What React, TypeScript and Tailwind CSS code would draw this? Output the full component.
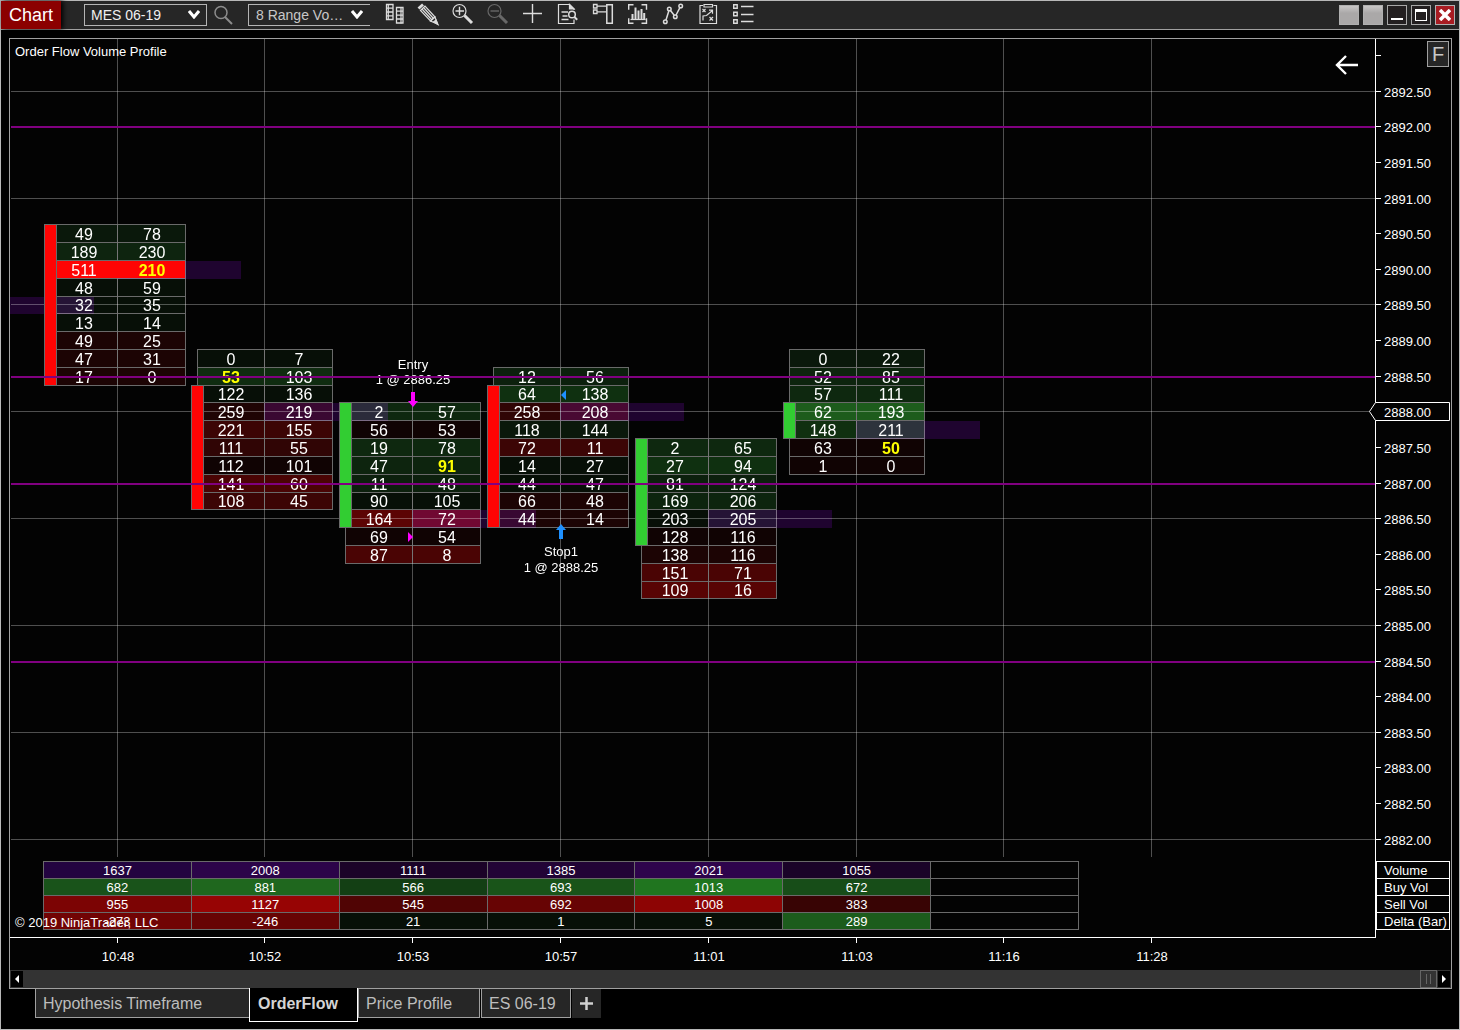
import type { ReactNode } from "react"

type Row = { bid: number; ask: number; fill: string; mark?: "bid" | "ask"; hot?: boolean }
type Bar = { top: number; body: [number, number]; up: boolean; poc: number; rows: Row[] }

const TIMES = ["10:48", "10:52", "10:53", "10:57", "11:01", "11:03", "11:16", "11:28"]
const LEVELS = [2892, 2888.5, 2887, 2884.5]
const MAX_PRICE = 2892.5
const TICK = 17.815
const LINE = "#6a6a6a"

const r = (bid: number, ask: number, fill: string, mark?: "bid" | "ask", hot?: boolean): Row => ({ bid, ask, fill, mark, hot })

// body and poc are row indexes, counted from the top of the bar
const BARS: Bar[] = [
  {
    top: 2890.5, body: [0, 8], up: false, poc: 2,
    rows: [
      r(49, 78, "#0a180b"), r(189, 230, "#0e240f"), r(511, 210, "#ff0404", "ask", true),
      r(48, 59, "#070f07"), r(32, 35, "#070f07"), r(13, 14, "#070f07"),
      r(49, 25, "#1c0404"), r(47, 31, "#1c0404"), r(17, 0, "#1c0404"),
    ],
  },
  {
    top: 2888.75, body: [2, 8], up: false, poc: 3,
    rows: [
      r(0, 7, "#070f07"), r(53, 103, "#0f2c10", "bid"), r(122, 136, "#070f07"),
      r(259, 219, "#1f0404"), r(221, 155, "#3c0505"), r(111, 55, "#300505"),
      r(112, 101, "#100303"), r(141, 60, "#4a0404"), r(108, 45, "#3c0505"),
    ],
  },
  {
    top: 2888, body: [0, 6], up: true, poc: 6,
    rows: [
      r(2, 57, "#0e280f"), r(56, 53, "#100303"), r(19, 78, "#0e280f"),
      r(47, 91, "#0d240e", "ask"), r(11, 48, "#0c200d"), r(90, 105, "#070f07"),
      r(164, 72, "#5c0404"), r(69, 54, "#100303"), r(87, 8, "#4a0404"),
    ],
  },
  {
    top: 2888.5, body: [1, 8], up: false, poc: 2,
    rows: [
      r(12, 56, "#0c200d"), r(64, 138, "#0f3010"), r(258, 208, "#300505"),
      r(118, 144, "#0a180b"), r(72, 11, "#3c0505"), r(14, 27, "#070f07"),
      r(44, 47, "#070f07"), r(66, 48, "#1c0404"), r(44, 14, "#1c0404"),
    ],
  },
  {
    top: 2887.5, body: [0, 5], up: true, poc: 4,
    rows: [
      r(2, 65, "#0e280f"), r(27, 94, "#0f3010"), r(81, 124, "#0c200d"),
      r(169, 206, "#0d240e"), r(203, 205, "#070f07"), r(128, 116, "#100303"),
      r(138, 116, "#1c0404"), r(151, 71, "#4a0404"), r(109, 16, "#580404"),
    ],
  },
  {
    top: 2888.75, body: [3, 4], up: true, poc: 4,
    rows: [
      r(0, 22, "#0a180b"), r(52, 85, "#0d240e"), r(57, 111, "#0e280f"),
      r(62, 193, "#1d5c1c"), r(148, 211, "#103010"), r(63, 50, "#100303", "ask"),
      r(1, 0, "#100303"),
    ],
  },
]

const SUMMARY = [
  { label: "Volume", values: [1637, 2008, 1111, 1385, 2021, 1055], fills: ["#230440", "#2c0449", "#1b0328", "#220436", "#2e044c", "#1a0328"] },
  { label: "Buy Vol", values: [682, 881, 566, 693, 1013, 672], fills: ["#19531a", "#1f671e", "#133f14", "#195419", "#20751f", "#174d18"] },
  { label: "Sell Vol", values: [955, 1127, 545, 692, 1008, 383], fills: ["#7c0404", "#970404", "#500404", "#670404", "#8d0404", "#380404"] },
  { label: "Delta (Bar)", values: [-273, -246, 21, 1, 5, 289], fills: ["#710404", "#670404", "#070f07", "#070f07", "#070f07", "#1c5c1c"] },
]

const barX = (i: number) => Math.floor(107 + 147.8 * i)
const priceY = (price: number) => Math.floor(52.2 + (MAX_PRICE - price) * 4 * 17.81)
const rowY = (price: number) => Math.floor(185.8 + (2890.5 - price) * 4 * TICK)
const textY = (price: number) => Math.floor((rowY(price) + rowY(price - 0.25)) / 2) + 7

function Profile({ x, price }: { x: number; price: number }) {
  const y = rowY(price)
  return <rect className="mix-blend-screen" x={x} y={y + 1} width={124} height={rowY(price - 0.25) - y} fill="#1f042f" />
}

function Cells({ bar, x }: { bar: Bar; x: number }) {
  return (
    <g>
      {bar.rows.map((row, i) => {
        const price = bar.top - i * 0.25
        const y = rowY(price)
        const h = rowY(price - 0.25) - y
        return (
          <g key={i}>
            <rect x={x - 67} y={y} width={136} height={h + 1} fill={LINE} />
            <rect x={x - 66} y={y + 1} width={134} height={h - 1} fill={row.fill} />
            <rect x={x} y={y} width={1} height={h} fill="#3a3a3a" />
          </g>
        )
      })}
    </g>
  )
}

function Body({ bar, x }: { bar: Bar; x: number }) {
  const y = rowY(bar.top - bar.body[0] * 0.25)
  const end = rowY(bar.top - (bar.body[1] + 1) * 0.25)
  return (
    <g>
      {bar.rows.map((row, i) => {
        if (!row.hot) return null
        const top = rowY(bar.top - i * 0.25)
        return <rect key={i} x={x - 60} y={top + 1} width={128} height={17} fill={row.fill} />
      })}
      <rect x={x - 73} y={y} width={13} height={end - y + 1} fill={LINE} />
      <rect x={x - 72} y={y + 1} width={11} height={end - y - 1} fill={bar.up ? "#32cd32" : "#ff0404"} />
    </g>
  )
}

function Numbers({ bar, x }: { bar: Bar; x: number }) {
  return (
    <g className="text-base" textAnchor="middle">
      {bar.rows.map((row, i) => {
        const y = textY(bar.top - i * 0.25)
        return (
          <g key={i}>
            <text x={x - 33} y={y} className={row.mark === "bid" ? "fill-[#ffff00] font-bold" : "fill-white"}>{row.bid}</text>
            <text x={x + 35} y={y} className={row.mark === "ask" ? "fill-[#ffff00] font-bold" : "fill-white"}>{row.ask}</text>
          </g>
        )
      })}
    </g>
  )
}

function Plot() {
  return (
    <svg className="isolate block min-h-0 w-full flex-1 overflow-hidden" role="img" aria-label="Order Flow Volume Profile">
      {BARS.map((bar, i) => <Cells key={i} bar={bar} x={barX(i)} />)}
      <Profile x={-40} price={2889.5} />
      {BARS.map((bar, i) => <Profile key={i} x={barX(i)} price={bar.top - bar.poc * 0.25} />)}

      <g className="fill-white/30">
        {TIMES.map((t, i) => <rect key={t} x={barX(i)} y={0} width={1} height="100%" />)}
        {Array.from({ length: 8 }, (_, i) => (
          <rect key={i} x={1} y={priceY(MAX_PRICE - i * 1.5)} width="100%" height={1} />
        ))}
      </g>

      {BARS.map((bar, i) => <Body key={i} bar={bar} x={barX(i)} />)}
      {BARS.map((bar, i) => <Numbers key={i} bar={bar} x={barX(i)} />)}

      <g className="fill-white text-[13px]" textAnchor="middle">
        <text x={403} y={330}>Entry</text>
        <text x={403} y={345}>1 @ 2886.25</text>
        <text x={551} y={517}>Stop1</text>
        <text x={551} y={533}>1 @ 2888.25</text>
      </g>
      <path d="M401 353h4v9h3l-5 6l-5-6h3z" fill="#ff00ff" />
      <path d="M398 493l5 5l-5 5z" fill="#ff00ff" />
      <path d="M549 500h4v-9h3l-5-6l-5 6h3z" fill="#1e90ff" />
      <path d="M556 351l-5 5l5 5z" fill="#1e90ff" />

      {LEVELS.map(p => <rect key={p} x={1} y={priceY(p)} width="100%" height={2} fill="#800080" />)}
    </svg>
  )
}

function PriceAxis() {
  const prices = Array.from({ length: 22 }, (_, i) => MAX_PRICE - i * 0.5)
  const y = priceY(2888)
  return (
    <svg className="block min-h-0 w-full flex-1 overflow-visible fill-white text-[13px]">
      <rect x={0} y={16} width={5} height={1} />
      {prices.map(p => (
        <g key={p}>
          <rect x={0} y={priceY(p)} width={5} height={1} />
          {p !== 2888 && <text x={8} y={priceY(p) + 6}>{p.toFixed(2)}</text>}
        </g>
      ))}
      <path d={`M-6.5 ${y + 0.5}L-0.5 ${y - 8.5}H73.5V${y + 9.5}H-0.5Z`} fill="#030303" stroke="#fff" />
      <text x={8} y={y + 6}>2888.00</text>
    </svg>
  )
}

function SummaryTable() {
  return (
    <table className="mt-1 mb-[7px] ml-[33px] w-[1036px] table-fixed border-collapse text-[13px] leading-[14px]">
      <tbody>
        {SUMMARY.map(row => (
          <tr key={row.label} aria-label={row.label}>
            {row.values.map((v, i) => (
              <td key={i} className="h-[17px] border border-[#6a6a6a] p-0 pt-0.5 text-center" style={{ backgroundColor: row.fills[i] }}>{v}</td>
            ))}
            <td className="h-[17px] border border-[#6a6a6a] p-0" />
          </tr>
        ))}
      </tbody>
    </table>
  )
}

function ToolButton({ label, dim, children }: { label: string; dim?: boolean; children: ReactNode }) {
  return (
    <button type="button" aria-label={label} disabled={dim} className={`flex h-7 w-[35px] shrink-0 items-center justify-center ${dim ? "text-[#686868]" : "text-[#dcdcdc]"}`}>
      <svg className="overflow-visible" width="21" height="22" viewBox="0 0 21 22" fill="none" stroke="currentColor" strokeWidth="1.2">{children}</svg>
    </button>
  )
}

function Toolbar() {
  return (
    <header className="flex h-[29px] shrink-0 items-center border-b border-[#a0a0a0] bg-[#262626]">
      <h1 className="flex h-7 w-[60px] shrink-0 items-center justify-center bg-[#8b0000] text-lg text-white shadow-[2px_0_5px_#000]">Chart</h1>

      <div className="relative ml-[23px] flex shrink-0">
        <select aria-label="Instrument" className="h-[22px] w-[123px] appearance-none border border-[#b4b4b4] bg-[#262626] pl-1.5 text-sm leading-5 text-[#f0f0f0]">
          <option>MES 06-19</option>
        </select>
        <Chevron />
      </div>
      <button type="button" aria-label="Search" className="ml-[7px] shrink-0 text-[#8c8c8c]">
        <svg width="19" height="20" viewBox="0 0 19 20" fill="none" stroke="currentColor">
          <circle cx="7" cy="7.500" r="6" strokeWidth="1.500" />
          <path d="M11 12l7 7" strokeWidth="2" />
        </svg>
      </button>
      <div className="relative ml-[15px] flex shrink-0">
        <select aria-label="Bar type" className="h-[22px] w-[122px] appearance-none border border-r-0 border-[#b4b4b4] bg-[#262626] pl-[7px] text-sm leading-5 text-[#c8c8c8]">
          <option>8 Range Vo…</option>
        </select>
        <Chevron />
      </div>

      <nav className="ml-1.5 flex">
        <ToolButton label="Market depth">
          <path d="M3.500 .5h6.500v15h-6.500zM3 4.200h7.500M3 8h7.500M3 11.800h7.500M13.500 3.500h6.500v15.500h-6.500zM13 7.200h7.500M13 11.200h7.500M13 15h7.500" strokeWidth="1.300" />
          <path d="M5.300 0v16M18 3v16.500" />
        </ToolButton>
        <ToolButton label="Draw">
          <path d="M.5 4.500l4.500-4" strokeWidth="2.800" />
          <path d="M2.500 6.500l4.500-4.500l10 11l-4.500 4z" />
          <path d="M4 5l10 11M5.500 3.500l10 11" />
          <path d="M12.500 17l4.500-4l2.500 7z" />
          <path d="M15.500 18l2.500-2l2 4.500z" fill="currentColor" />
        </ToolButton>
        <ToolButton label="Zoom in">
          <circle cx="6.500" cy="7" r="6.500" />
          <path d="M2.500 7h8.500M6.500 2.800v8.500" strokeWidth="1.400" />
          <path d="M11.500 11.500l7.500 7.500" strokeWidth="3" />
        </ToolButton>
        <ToolButton label="Zoom out" dim>
          <circle cx="6.500" cy="7" r="6.500" />
          <path d="M2.500 7h8.500" strokeWidth="1.400" />
          <path d="M11.500 11.500l7.500 7.500" strokeWidth="3" />
        </ToolButton>
        <ToolButton label="Crosshair">
          <path d="M0 9.500h19M9.500 0v19" strokeWidth="1.400" />
        </ToolButton>
        <ToolButton label="Data box">
          <path d="M16 15.500v4h-15.500v-19h11l4.500 4.500v1" />
          <path d="M11.500 .5v4.500h4.500z" fill="currentColor" />
          <path d="M3.500 8h6.500M4.500 12h5M3.500 15.500h7" strokeWidth="1.600" />
          <circle cx="14" cy="10.500" r="3.300" strokeWidth="1.500" />
          <path d="M16.200 12.800l3 3" strokeWidth="2" />
        </ToolButton>
        <ToolButton label="Chart trader">
          <path d="M.5 .5h3.500v3.500H.5zM.5 6h3.500v3.500H.5zM4.500 2.200h9M4.500 7.800h9" strokeWidth="1.300" />
          <path d="M13.800 .7h5.500v18.500h-5.500z" strokeWidth="1.500" />
        </ToolButton>
        <ToolButton label="Data series">
          <path d="M5.500 .7H.7v5M13.500 .7h5v5M5.500 19.300H.7v-5M13.500 19.300h5v-5" strokeWidth="1.400" />
          <path d="M4.500 10v6M7.500 3.500v12.500M10.500 6.500v9.500M13.500 5v11M16.200 9v7" strokeWidth="2" />
          <path d="M2.500 15.500h15" />
        </ToolButton>
        <ToolButton label="Indicators">
          <g strokeWidth="1.500">
            <circle cx="2.300" cy="17.700" r="1.800" />
            <circle cx="6.300" cy="5" r="1.800" />
            <circle cx="12.300" cy="12.700" r="1.800" />
            <circle cx="17.700" cy="2" r="1.800" />
            <path d="M3 16l2.800-9M7.500 6.500l3.700 4.800M13.100 11l3.800-7.300" />
          </g>
        </ToolButton>
        <ToolButton label="Strategies">
          <path d="M5 1.500H2v18h16.500v-18H15.500M6 .5h8.500v2.500h-8.500z" />
          <path d="M4.500 5l3 3M7.500 5l-3 3M11.500 13l3.500 3.500M15 13l-3.500 3.500M5 16.500v-4.500l3.500-.5l6-5M11 6.200h3.500v3.500" />
        </ToolButton>
        <ToolButton label="Properties">
          <path d="M.7 .7h3.500v3.500H.7zM.7 8.200h3.500v3.500H.7zM.7 15.700h3.500v3.500H.7z" strokeWidth="1.400" />
          <path d="M8 2.500h12.500M8 10.500h12.500M8 17.500h12.500" strokeWidth="1.400" />
        </ToolButton>
      </nav>

      <div className="ml-auto flex gap-1 pr-1">
        <button type="button" aria-label="Link instrument" className="size-5 border border-[#b0b0b0] bg-linear-to-b from-[#c8c6c6] to-[#aaa8a8] to-40%" />
        <button type="button" aria-label="Link interval" className="size-5 border border-[#b0b0b0] bg-linear-to-b from-[#c8c6c6] to-[#aaa8a8] to-40%" />
        <button type="button" aria-label="Minimize" className="flex size-5 items-end justify-center border border-[#a8a8a8] bg-[#231f20] pb-1">
          <span className="h-0.5 w-3 bg-white" />
        </button>
        <button type="button" aria-label="Maximize" className="flex size-5 items-center justify-center border border-[#a8a8a8] bg-[#231f20]">
          <span className="size-3 border border-t-[3px] border-white" />
        </button>
        <button type="button" aria-label="Close" className="flex size-5 items-center justify-center border border-[#b0b0b0] bg-[#a81c22]">
          <svg width="12" height="12" viewBox="0 0 12 12" stroke="#fff" strokeWidth="3.500"><path d="M1 1l10 10M11 1L1 11" /></svg>
        </button>
      </div>
    </header>
  )
}

function Chevron() {
  return (
    <svg className="pointer-events-none absolute top-1.5 right-[7px]" width="12" height="9" viewBox="0 0 12 9" fill="none" stroke="#fff" strokeWidth="3">
      <path d="M1 1l5 6l5-6" />
    </svg>
  )
}

function TimeAxis() {
  return (
    <svg className="block h-8 w-full shrink-0 fill-white text-[13px]">
      {TIMES.map((t, i) => (
        <g key={t}>
          <rect x={barX(i)} y={0} width={1} height={5} />
          <text x={barX(i) + 1} y={23} textAnchor="middle">{t}</text>
        </g>
      ))}
    </svg>
  )
}

function ScrollBar() {
  return (
    <div className="flex h-[18px] shrink-0 items-center bg-[#333333] px-px">
      <button type="button" aria-label="Scroll left" className="flex h-4 w-3 items-center justify-center bg-black">
        <svg width="4" height="8" viewBox="0 0 4 8" fill="#fff"><path d="M4 0v8L0 4z" /></svg>
      </button>
      <div className="mr-px ml-auto flex h-[18px] w-[17px] items-center justify-center gap-[3px] border border-[#666] bg-[#333]">
        <span className="h-2.5 w-px bg-[#666]" />
        <span className="h-2.5 w-px bg-[#666]" />
      </div>
      <button type="button" aria-label="Scroll right" className="flex h-4 w-3 items-center justify-center bg-black">
        <svg width="4" height="8" viewBox="0 0 4 8" fill="#fff"><path d="M0 0v8l4-4z" /></svg>
      </button>
    </div>
  )
}

function Tabs() {
  const tab = "h-[29px] border border-t-0 border-[#a0a0a0] bg-[#262626] pt-0.5 pl-[7px] text-left text-[#bdbdbd]"
  return (
    <div className="flex h-10 shrink-0 items-start pl-[34px] text-base leading-6">
      <button type="button" className={`${tab} w-[214px] border-r-0`}>Hypothesis Timeframe</button>
      <button type="button" className="relative -mt-px h-[34px] w-[109px] border border-t-0 border-white bg-black pb-0.5 pl-2 text-left font-bold text-[#d4d4d4]">OrderFlow</button>
      <button type="button" className={`${tab} w-[122px]`}>Price Profile</button>
      <button type="button" className={`${tab} ml-px w-[90px]`}>ES 06-19</button>
      <button type="button" aria-label="New tab" className="ml-px flex h-[29px] w-[29px] items-center justify-center bg-[#262626]">
        <svg width="13" height="13" viewBox="0 0 13 13" stroke="#d0d0d0" strokeWidth="2.500"><path d="M0 6.500h13M6.500 0v13" /></svg>
      </button>
    </div>
  )
}

export default function App() {
  return (
    <div className="flex h-screen min-h-[600px] flex-col border border-[#b8b8b8] bg-black font-['Liberation_Sans',Arial,sans-serif] text-white">
      <Toolbar />
      <main className="flex min-h-0 flex-1 flex-col pt-2 pr-[7px] pl-2">
        <div className="flex min-h-0 flex-1 flex-col border border-[#a0a0a0] bg-[#030303]">
          <div className="flex min-h-0 flex-1">
            <section className="relative flex min-w-0 flex-1 flex-col overflow-hidden border-b border-white">
              <Plot />
              <SummaryTable />
              <p className="absolute top-[5px] left-[5px] text-[13px] leading-4">Order Flow Volume Profile</p>
              <p className="absolute bottom-1.5 left-[5px] text-[13px] leading-4">© 2019 NinjaTrader, LLC</p>
              <button type="button" aria-label="Return to latest bar" className="absolute top-4 right-4">
                <svg width="24" height="20" viewBox="0 0 24 20" fill="none" stroke="#fff" strokeWidth="2.400">
                  <path d="M23 10H2M11 1l-9 9l9 9" />
                </svg>
              </button>
            </section>
            <aside className="relative flex w-[76px] shrink-0 flex-col border-l border-white">
              <PriceAxis />
              <ul className="mt-1 mb-2 mr-px border border-white text-[13px] leading-[18px]">
                {SUMMARY.map(row => (
                  <li key={row.label} className="h-[17px] border-b border-white pl-[7px] whitespace-nowrap last:h-4 last:border-b-0">{row.label}</li>
                ))}
              </ul>
              <button type="button" aria-label="Fixed scale" className="absolute top-0.5 right-0.5 flex h-[26px] w-[22px] items-center justify-center border border-[#a0a0a0] bg-[#262626] text-xl text-[#c8c8c8]">F</button>
            </aside>
          </div>
          <TimeAxis />
          <ScrollBar />
        </div>
      </main>
      <Tabs />
    </div>
  )
}
